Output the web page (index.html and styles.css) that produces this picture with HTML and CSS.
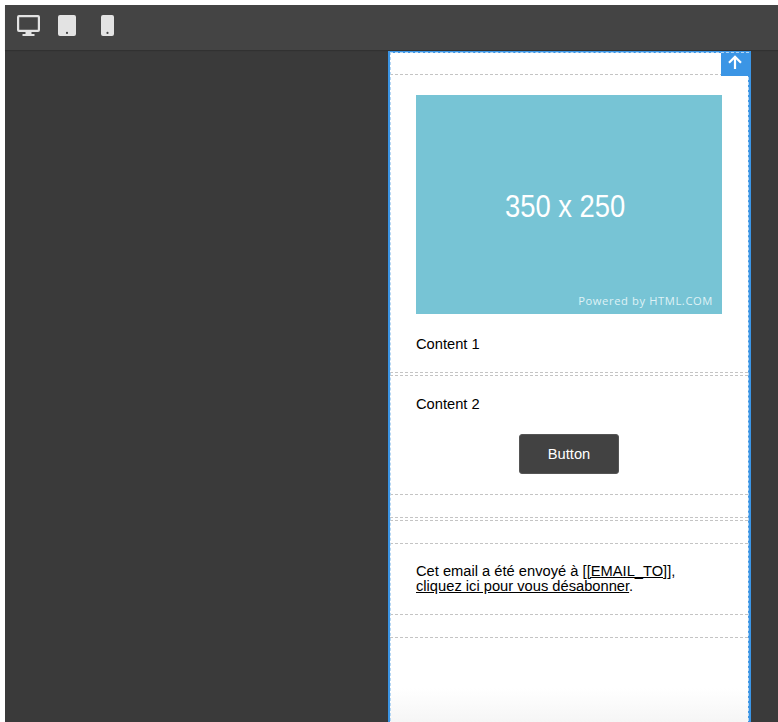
FILE: index.html
```html
<!DOCTYPE html>
<html lang="fr">
<head>
<meta charset="utf-8">
<title>Email editor</title>
<link rel="stylesheet" href="styles.css">
</head>
<body>
<div class="app">
  <header class="toolbar">
    <svg class="icon-desktop" width="23" height="21" viewBox="0 0 23 21"><path fill="#e3e3e3" fill-rule="evenodd" d="M2 0h19a2 2 0 0 1 2 2v13a2 2 0 0 1-2 2h-6.500v2h3V21H5.500v-2h3v-2H2a2 2 0 0 1-2-2V2a2 2 0 0 1 2-2zm.200 2.200v12.600h18.600V2.200z"/></svg>
    <svg class="icon-tablet" width="18" height="21" viewBox="0 0 18 21"><path fill="#e3e3e3" fill-rule="evenodd" d="M2 0h14a2 2 0 0 1 2 2v17a2 2 0 0 1-2 2H2a2 2 0 0 1-2-2V2a2 2 0 0 1 2-2zm7 16.800a1.100 1.100 0 1 0 0 2.200 1.100 1.100 0 0 0 0-2.200z"/></svg>
    <svg class="icon-phone" width="13" height="21" viewBox="0 0 13 21"><path fill="#e3e3e3" fill-rule="evenodd" d="M2 0h9a2 2 0 0 1 2 2v17a2 2 0 0 1-2 2H2a2 2 0 0 1-2-2V2a2 2 0 0 1 2-2zm4.500 16.800a1.100 1.100 0 1 0 0 2.200 1.100 1.100 0 0 0 0-2.200z"/></svg>
  </header>
  <main class="stage">
    <div class="frame">
      <button class="up" type="button" aria-label="Haut">
        <svg width="14" height="14" viewBox="0 0 14 14"><path fill="none" stroke="#fff" stroke-width="2.200" d="M7 14V2M1 7.800 7 1.800 13 7.800"/></svg>
      </button>
      <section class="row row-top"></section>
      <section class="row row-hero">
        <div class="placeholder">
          <span class="placeholder-size">350 x 250</span>
          <span class="placeholder-credit">Powered by HTML.COM</span>
        </div>
        <p class="copy">Content 1</p>
      </section>
      <section class="row row-cta">
        <p class="copy">Content 2</p>
        <a class="button" href="#">Button</a>
      </section>
      <section class="row row-gap"></section>
      <section class="row row-gap row-gap-second"></section>
      <section class="row row-footer">
        <p class="footer-text">Cet email a été envoyé à <a href="#">[[EMAIL_TO]]</a>,<br><a href="#">cliquez ici pour vous désabonner</a>.</p>
      </section>
      <section class="row row-gap"></section>
    </div>
  </main>
</div>
</body>
</html>
```
FILE: styles.css
```css
* { box-sizing: border-box; }
html, body { height: 100%; }
body {
  margin: 0;
  padding: 5px 0 0 5px;
  background: #fff;
  overflow: hidden;
  font-family: "Liberation Sans", Arial, sans-serif;
}
.app { height: 717px; display: flex; flex-direction: column; background: #3a3a3a; }
.toolbar {
  height: 45px;
  flex: none;
  background: #444;
  display: flex;
  align-items: center;
  padding: 0 0 4px 12px;
  box-shadow: 0 1px 1px rgba(0,0,0,.15);
  position: relative;
}
.icon-desktop { margin-right: 18px; }
.icon-tablet { margin-right: 25px; }
.stage { flex: 1; padding: 1px 0 0 383px; overflow: hidden; }
.frame {
  position: relative;
  width: 363px;
  height: 680px;
  border: 2px solid #3b95e5;
  border-right-width: 3px;
  border-bottom: 0;
  background: linear-gradient(#fff 0, #fff 635px, #f3f3f3 100%);
}
.frame::before {
  content: "";
  position: absolute;
  inset: -1px -1px 0 0;
  border: 1px dashed #b5d6f3;
  border-bottom: 0;
  pointer-events: none;
}
.up {
  position: absolute;
  top: 0;
  right: -2px;
  width: 29px;
  height: 23px;
  padding: 0 2px 5px 0;
  border: 0;
  background: #3b95e5;
  display: flex;
  align-items: center;
  justify-content: center;
}
.row { border-bottom: 1px dashed #c4c4c4; }
.row-top { height: 22px; }
.row-hero { height: 298px; padding: 20px 26px 0 26px; }
.row-cta { height: 120px; margin-top: 2px; border-top: 1px dashed #c4c4c4; padding: 19px 26px 0; }
.row-gap { height: 23px; }
.row-gap-second { height: 24px; margin-top: 2px; border-top: 1px dashed #c4c4c4; }
.row-footer { height: 71px; padding: 20px 26px 0; }
.placeholder {
  position: relative;
  width: 306px;
  height: 219px;
  background: #77c4d5;
  color: #fff;
}
.placeholder-size {
  position: absolute;
  left: 89px;
  top: 88px;
  font-size: 32px;
  line-height: 46px;
  transform: scaleX(.855);
  transform-origin: left center;
  white-space: nowrap;
}
.placeholder-credit {
  position: absolute;
  right: 9px;
  bottom: 5px;
  font-family: "Open Sans", sans-serif;
  font-size: 11.200px;
  line-height: 16px;
  letter-spacing: .6px;
  color: #dff2f6;
  white-space: nowrap;
}
.copy { margin: 21px 0 0; font-size: 14.700px; line-height: 18px; color: #000; }
.row-cta .copy { margin: 0; }
.button {
  display: block;
  width: 100px;
  height: 40px;
  margin: 21px auto 0;
  background: #424242;
  border: 1px solid #555;
  border-radius: 3px;
  color: #fff;
  font-size: 14.700px;
  line-height: 38px;
  text-align: center;
  text-decoration: none;
}
.footer-text { margin: 0; font-size: 14.700px; line-height: 15px; color: #000; }
.footer-text a { color: #000; text-decoration: underline; }
```
